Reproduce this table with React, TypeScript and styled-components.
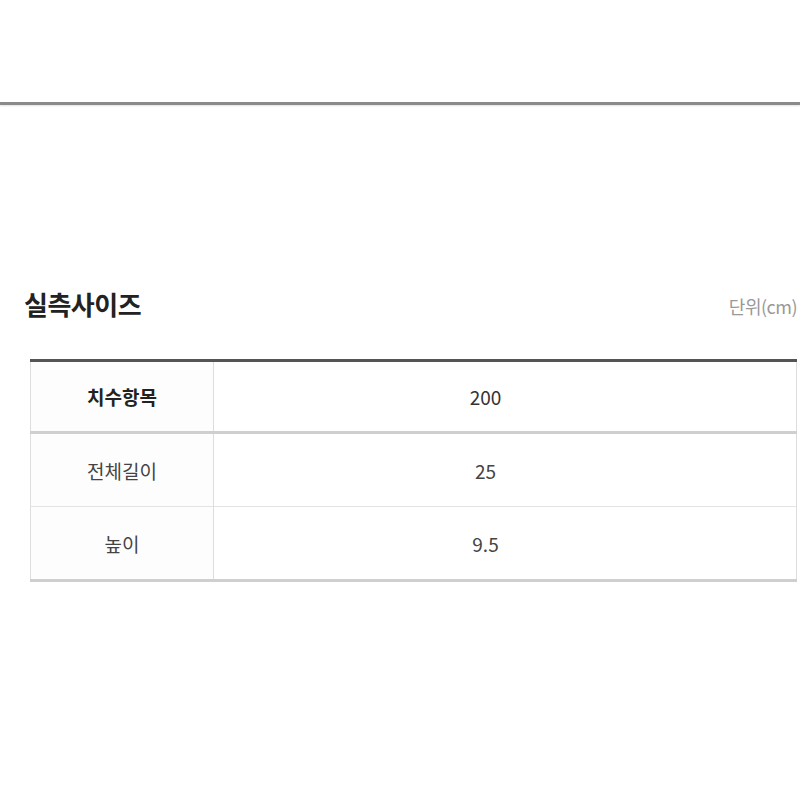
import React from "react";
import styled, { createGlobalStyle } from "styled-components";

const GlobalStyle = createGlobalStyle`
  html, body {
    margin: 0;
    padding: 0;
    background: #ffffff;
    font-family: "Noto Sans CJK KR", "Noto Sans", sans-serif;
  }
`;

const rows = [
  { label: "치수항목", value: "200", head: true },
  { label: "전체길이", value: "25" },
  { label: "높이", value: "9.5" },
];

const App: React.FC = () => {
  return (
    <Page>
      <GlobalStyle />
      <TopRule />
      <Section>
        <Header>
          <Title>실측사이즈</Title>
          <Unit>단위(cm)</Unit>
        </Header>
        <Table>
          <tbody>
            {rows.map((r) => (
              <Row key={r.label} $head={r.head}>
                <Label $head={r.head}>{r.label}</Label>
                <Value $head={r.head}>{r.value}</Value>
              </Row>
            ))}
          </tbody>
        </Table>
      </Section>
    </Page>
  );
};

export default App;

const Page = styled.div`
  width: 800px;
  height: 800px;
  padding-top: 102px;
  box-sizing: border-box;
`;

const TopRule = styled.div`
  height: 3px;
  background: #8a8a8a;
  box-shadow: 0 1px 2px rgba(0, 0, 0, 0.12);
`;

const Section = styled.section`
  padding: 178px 3px 0 30px;
`;

const Header = styled.div`
  display: flex;
  justify-content: space-between;
  align-items: center;
  margin-left: -6px;
  height: 40px;
  margin-bottom: 36px;
`;

const Title = styled.h2`
  margin: 0;
  font-size: 26px;
  font-weight: 700;
  color: #222;
  letter-spacing: -0.5px;
`;

const Unit = styled.span`
  font-size: 18px;
  color: #999;
  padding-top: 6px;
  letter-spacing: -0.5px;
`;

const Table = styled.table`
  width: 100%;
  border-collapse: collapse;
  border-top: 3px solid #555;
  border-bottom: 3px solid #cfcfcf;
  border-right: 1px solid #ddd;
  border-left: 1px solid #ddd;
`;

const Row = styled.tr<{ $head?: boolean }>`
  height: ${(p) => (p.$head ? "72px" : "74px")};
  border-bottom: ${(p) => (p.$head ? "3px solid #cfcfcf" : "1px solid #e3e3e3")};
`;

const Label = styled.td<{ $head?: boolean }>`
  width: 180px;
  text-align: center;
  font-size: 19px;
  font-weight: ${(p) => (p.$head ? 700 : 400)};
  color: ${(p) => (p.$head ? "#222" : "#444")};
  border-right: 1px solid #ddd;
  background: #fdfdfd;
`;

const Value = styled.td<{ $head?: boolean }>`
  text-align: center;
  padding-right: 40px;
  font-size: 19px;
  font-weight: 400;
  color: ${(p) => (p.$head ? "#333" : "#444")};
`;
